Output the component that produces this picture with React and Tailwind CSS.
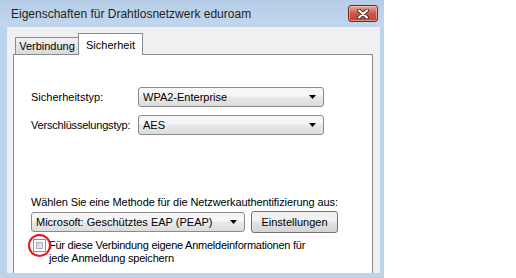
const font = { fontFamily: '"Liberation Sans", Arial, sans-serif' };

function Arrow() {
  return (
    <svg width="7" height="4" viewBox="0 0 7 4" className="shrink-0">
      <path d="M0 0H7L3.5 4Z" fill="#000" />
    </svg>
  );
}

function Combo({ value, className }) {
  return (
    <div
      className={`flex h-[20px] items-center justify-between rounded-[3px] border border-[#8a8a8a] bg-gradient-to-b from-[#f6f6f6] from-45% via-[#e9e9e9] via-50% to-[#dcdcdc] pl-[4px] pr-[7px] ${className}`}
    >
      <span className="truncate">{value}</span>
      <Arrow />
    </div>
  );
}

function CloseButton() {
  return (
    <div className="flex h-[17px] w-[30px] items-center justify-center rounded-[3px] border border-[#6b2b22] bg-gradient-to-b from-[#e8a999] via-[#c9574a] to-[#c0432f] shadow-[inset_0_0_0_1px_rgba(255,220,210,0.5)]">
      <svg width="12" height="10" viewBox="0 0 12 10">
        <path d="M2 1.5L10 8.5M10 1.5L2 8.5" stroke="#4a3330" strokeWidth="4" strokeLinecap="round" />
        <path d="M2 1.5L10 8.5M10 1.5L2 8.5" stroke="#ffffff" strokeWidth="2" strokeLinecap="round" />
      </svg>
    </div>
  );
}

export default function App() {
  return (
    <div className="flex h-[278px] w-[516px] bg-white text-[11px] text-black" style={font}>
      <div className="flex h-full w-[384px] flex-col bg-[#bcd3ec]">
        {/* title bar */}
        <div className="flex h-[27px] items-center justify-between bg-gradient-to-b from-[#b6cde7] to-[#c2d7ee] pl-[11px] pr-[6px]">
          <span className="pt-[1px] text-[12px] text-[#1e1e1e]">Eigenschaften für Drahtlosnetzwerk eduroam</span>
          <CloseButton />
        </div>

        <div className="flex flex-1 min-h-0 pl-[7px] pr-[4px]">
          <div className="flex flex-1 flex-col bg-[#f0f0f0] pl-[6px] pr-[7px] pt-[6px]">
            {/* tabs */}
            <div className="flex items-end pl-[2px]">
              <div className="flex h-[17px] w-[64px] items-center justify-center border border-b-0 border-[#898c95] bg-gradient-to-b from-[#f2f2f2] to-[#d9d9d9]">
                Verbindung
              </div>
              <div className="relative z-10 -mb-px -ml-px flex h-[22px] w-[65px] items-start justify-center border border-b-0 border-[#898c95] bg-white pt-[3px]">
                Sicherheit
              </div>
            </div>

            {/* tab panel */}
            <div className="flex flex-1 flex-col border border-b-0 border-[#898c95] bg-white pl-[17px] pt-[32px]">
              <div className="grid grid-cols-[107px_186px] items-center gap-y-[8px]">
                <span>Sicherheitstyp:</span>
                <Combo value="WPA2-Enterprise" />
                <span className="tracking-[-0.2px]">Verschlüsselungstyp:</span>
                <Combo value="AES" />
              </div>

              <div className="mt-[60px] leading-[15px] tracking-[-0.1px]">
                Wählen Sie eine Methode für die Netzwerkauthentifizierung aus:
              </div>

              <div className="mt-[1px] flex items-center gap-[6px]">
                <Combo value="Microsoft: Geschütztes EAP (PEAP)" className="w-[214px]" />
                <div className="flex h-[22px] w-[87px] items-center justify-center rounded-[3px] border border-[#707070] bg-gradient-to-b from-[#f2f2f2] from-45% via-[#e4e4e4] via-50% to-[#d4d4d4]">
                  Einstellungen
                </div>
              </div>

              <div className="mt-[6px] flex items-start gap-[3px] pl-[2px]">
                <div className="relative h-[13px] w-[13px] shrink-0 border border-[#8e8f8f] bg-white p-[2px]">
                  <div className="h-full w-full border border-[#aeb3b9] bg-gradient-to-br from-[#cbcfd5] to-[#f0f0f0]" />
                  <div className="absolute left-[-6px] top-[-6px] h-[23px] w-[23px] rounded-full border-2 border-[#e4161b]" />
                </div>
                <div className="leading-[13px]">
                  <div className="tracking-[-0.25px]">Für diese Verbindung eigene Anmeldeinformationen für</div>
                  <div className="tracking-[-0.2px]">jede Anmeldung speichern</div>
                </div>
              </div>
            </div>
          </div>
        </div>
        <div className="h-[5px]" />
      </div>
    </div>
  );
}
